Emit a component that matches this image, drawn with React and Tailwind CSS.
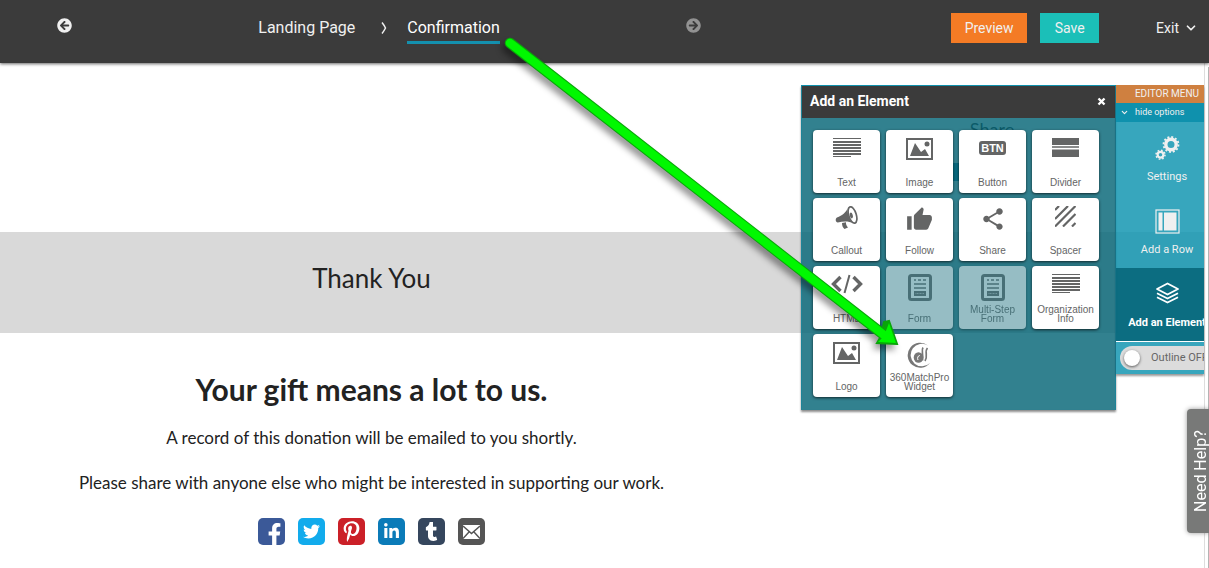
import { useState } from 'react';
import clsx from 'clsx';
import { FaArrowCircleLeft, FaArrowCircleRight, FaFacebookF, FaTwitter, FaPinterestP, FaLinkedinIn, FaTumblr } from 'react-icons/fa';
import { MdThumbUp, MdShare } from 'react-icons/md';
import { ChevronDown } from 'lucide-react';

const LinesIcon = () => (
  <svg width="28" height="20" viewBox="0 0 28 20" fill="currentColor">
    <path d="M0 0h28v1H0zM0 3h28v2H0zM0 6h28v2H0zM0 9h28v2H0zM0 12h28v2H0zM0 15h28v2H0zM0 18h18v1H0z" />
  </svg>
);

const ImageIcon = () => (
  <svg width="27" height="22" viewBox="0 0 27 22" fill="currentColor">
    <path fillRule="evenodd" d="M0 0h27v22H0zM2 2v18h23V2z" />
    <path d="M4 18 9 5l6 9 4-3 4 7z" />
    <circle cx="21" cy="6" r="2.5" />
  </svg>
);

const ButtonIcon = () => (
  <span className="mt-[3px] rounded-[3px] bg-[#646565] px-[2px] text-[11px] leading-[14px] font-bold text-white">BTN</span>
);

const DividerIcon = () => (
  <svg width="27" height="19" viewBox="0 0 27 19" fill="currentColor">
    <path d="M0 0h27v7H0zM0 8.3h27v1.4H0zM0 11.5h27V19H0z" />
  </svg>
);

const CalloutIcon = () => (
  <svg width="24" height="24" viewBox="0 0 24 24" fill="currentColor">
    <ellipse cx="17.500" cy="9" rx="3.800" ry="8.500" transform="rotate(-17 17.500 9)" fill="none" stroke="currentColor" strokeWidth="1.700" />
    <path d="M12.500 1.500C12 6 7 9.500 2 11.500c-2 1-1.500 5 .8 5 5.500-1.500 11.500-1.500 15.200.8-3.500-3.300-6-10-5.500-15.800z" />
    <path d="m7 17 4-.8c-.2 2 .5 3.600 2 5.300l-3.500 1.500C7.800 21.500 7 19.500 7 17z" />
    <ellipse cx="16.300" cy="9.500" rx="1.500" ry="3" transform="rotate(-17 16.300 9.500)" />
  </svg>
);

const CodeIcon = () => (
  <svg width="32" height="20" viewBox="0 0 32 20" fill="none" stroke="currentColor">
    <path d="M9.500 3 2.500 10l7 7M22.500 3l7 7-7 7" strokeWidth="3.400" />
    <path d="M18.500 1 13.500 19" strokeWidth="2" />
  </svg>
);

const SpacerIcon = () => (
  <svg width="21" height="21" viewBox="0 0 21 21" fill="none" stroke="currentColor" strokeWidth="2.200">
    <path d="M0 4 4 0M0 13 13 0M0 20.500 20.500 0M8 20.500 20.500 8M17 20.500 20.500 17" />
  </svg>
);

const FormIcon = () => (
  <svg width="24" height="27" viewBox="0 0 24 27" fill="none" stroke="currentColor">
    <rect x="1.500" y="1.500" width="21" height="24" rx="2" strokeWidth="3" />
    <path d="M6 6h2M10 6h3M15 6h3M6 10h12M6 14h12" strokeWidth="1.600" />
    <path d="M6 17h12v5H6z" fill="currentColor" stroke="none" />
    <path d="M7.500 19.500h9" stroke="#fff" strokeOpacity=".5" strokeDasharray="1 .5" />
  </svg>
);

const MatchIcon = () => (
  <svg width="27" height="27" viewBox="0 0 27 27" fill="none">
    <path d="M22 3.500A12.500 12.500 0 1 0 24 21 11.300 11.300 0 1 1 22 3.500z" fill="#777" />
    <ellipse cx="12.500" cy="15.500" rx="4.800" ry="5.200" fill="#777" />
    <path d="M17 5.500c-2 3 .5 6-.5 13M21.500 6c-3.500 3.500 1 8-2.500 13" stroke="#777" strokeWidth="1.700" />
    <path d="M12 18c-1-2 0-4.500 1.800-4.500" stroke="#fff" strokeWidth="1" />
  </svg>
);

const SettingsIcon = () => (
  <svg width="25" height="25" viewBox="0 0 25 25" fill="none" stroke="currentColor">
    <circle cx="16" cy="8.500" r="5.200" strokeWidth="3.400" />
    <circle cx="16" cy="8.500" r="7.500" strokeWidth="1.800" strokeDasharray="2 1.930" />
    <circle cx="5.500" cy="18.700" r="2.900" strokeWidth="2.200" />
    <circle cx="5.500" cy="18.700" r="4.500" strokeWidth="1.500" strokeDasharray="1.700 1.830" />
  </svg>
);

const RowIcon = () => (
  <svg width="25" height="25" viewBox="0 0 25 25">
    <rect x="1" y="1" width="23" height="23" fill="none" stroke="currentColor" strokeWidth="1.200" />
    <path d="M3.500 3.500h4v18h-4zM9 3.500h12.500v18H9z" fill="currentColor" />
  </svg>
);

const LayersIcon = () => (
  <svg width="25" height="22" viewBox="0 0 25 22" fill="none" stroke="currentColor" strokeWidth="1.800" strokeLinejoin="round">
    <path d="m12.500 1.500 10.500 5.500-10.500 5.500L2 7zM2 11.200l10.500 5.300L23 11.200M2 15.200l10.500 5.300L23 15.200" />
  </svg>
);

const MailIcon = () => (
  <svg width="17" height="14" viewBox="0 0 17 14">
    <path d="M0 0h17v14H0z" fill="#fff" />
    <path d="m0 1 8.500 7.500L17 1M0 13.500 6 7M17 13.500 11 7" fill="none" stroke="#555" strokeWidth="1.500" />
  </svg>
);

const elements = [
  { name: 'Text', icon: <LinesIcon /> },
  { name: 'Image', icon: <ImageIcon /> },
  { name: 'Button', icon: <ButtonIcon /> },
  { name: 'Divider', icon: <DividerIcon /> },
  { name: 'Callout', icon: <CalloutIcon /> },
  { name: 'Follow', icon: <MdThumbUp size={27} /> },
  { name: 'Share', icon: <MdShare size={26} /> },
  { name: 'Spacer', icon: <SpacerIcon /> },
  { name: 'HTML', icon: <CodeIcon /> },
  { name: 'Form', icon: <FormIcon />, disabled: true },
  { name: 'Multi-Step Form', icon: <FormIcon />, disabled: true },
  { name: 'Organization Info', icon: <LinesIcon /> },
  { name: 'Logo', icon: <ImageIcon /> },
  { name: '360MatchPro Widget', icon: <MatchIcon /> },
];

const menuItems = [
  { name: 'Settings', icon: <SettingsIcon /> },
  { name: 'Add a Row', icon: <RowIcon /> },
  { name: 'Add an Element', icon: <LayersIcon />, active: true },
];

const socials = [
  { name: 'Facebook', color: 'bg-[#3b5998]', icon: <FaFacebookF size={22} className="mt-[5px] ml-[6px]" /> },
  { name: 'Twitter', color: 'bg-[#12abec]', icon: <FaTwitter size={17} /> },
  { name: 'Pinterest', color: 'bg-[#cb2028]', icon: <FaPinterestP size={21} /> },
  { name: 'LinkedIn', color: 'bg-[#0b7bb8]', icon: <FaLinkedinIn size={17} /> },
  { name: 'Tumblr', color: 'bg-[#35465d]', icon: <FaTumblr size={19} /> },
  { name: 'Email', color: 'bg-[#555555]', icon: <MailIcon /> },
];

const Header = () => (
  <header className="relative flex h-[63px] items-start bg-[#3b3b3b] font-[Roboto,sans-serif] text-[#f0f0f0] shadow-[0_1px_3px_rgba(0,0,0,0.6)]">
    <nav className="mr-[250px] ml-[57px] flex flex-1 items-start justify-between pt-[18px]">
      <button type="button" aria-label="Previous step"><FaArrowCircleLeft size={15} /></button>
      <div className="flex items-start text-base leading-5">
        <a href="#landing">Landing Page</a>
        <svg className="mr-5 ml-[26px] mt-1" width="6" height="12" viewBox="0 0 6 12" fill="none" stroke="currentColor" strokeWidth="1.500">
          <path d="M1 .5Q3 3 4.500 6 3 9 1 11.500" />
        </svg>
        <a href="#confirmation" className="border-b-3 border-[#1490ae] pb-[3px] text-white">Confirmation</a>
      </div>
      <button type="button" aria-label="Next step" className="text-[#929292]"><FaArrowCircleRight size={15} /></button>
    </nav>
    <div className="flex items-center pt-[13px] pr-[11px] text-sm leading-[30px]">
      <button type="button" className="w-[76px] bg-[#f47b25]">Preview</button>
      <button type="button" className="ml-[13px] w-[59px] bg-[#1bbfb8]">Save</button>
      <button type="button" className="ml-[57px] flex items-center gap-[5px]">Exit <ChevronDown size={14} strokeWidth={3} /></button>
    </div>
  </header>
);

const ElementPanel = () => (
  <section className="w-[315px] self-start border border-t-[#0f91ad] border-x-[#1d8499] border-b-[#31808f] bg-[#086778]/83 shadow-[0_2px_2px_rgba(0,0,0,0.45)]">
    <div className="flex h-8 items-center justify-between bg-[#3b3b3b] pr-[9px] pl-2 font-[Roboto,sans-serif] text-white">
      <h2 className="pb-[2px] text-sm font-bold">Add an Element</h2>
      <button type="button" aria-label="Close" className="pb-[2px]">
        <svg width="9" height="9" viewBox="0 0 9 9" stroke="currentColor" strokeWidth="2.400"><path d="m1.500 1.500 6 6M7.500 1.500l-6 6" /></svg>
      </button>
    </div>
    <div className="grid grid-cols-[repeat(4,67px)] gap-x-[6px] gap-y-[5px] px-[11px] pt-3 pb-3">
      {elements.map((item) => (
        <button
          key={item.name}
          type="button"
          disabled={item.disabled}
          className={clsx(
            'flex h-[63px] flex-col items-center justify-between rounded-[4px] bg-white pt-2 pb-[6px] text-[#646565] shadow-[0_1px_3px_rgba(0,0,0,0.7)]',
            item.disabled && 'opacity-50',
          )}
        >
          {item.icon}
          <span className="-mt-2 text-[10px] leading-[9px]">{item.name}</span>
        </button>
      ))}
    </div>
  </section>
);

const EditorMenu = ({ outline, onToggle }) => (
  <aside className="w-[88px] self-start overflow-hidden font-[Roboto,sans-serif] text-[#f0f0f0] shadow-[0_2px_2px_rgba(0,0,0,0.4)]">
    <div className="w-[102px]">
      <div className="h-[18px] bg-[#cf8040] text-center text-[10px] leading-[18px]">EDITOR MENU</div>
      <button type="button" className="flex h-[19px] w-full items-center gap-[6px] bg-[#0f91ad] pl-1 text-[9px]">
        <ChevronDown size={9} strokeWidth={3} />
        hide options
      </button>
      {menuItems.map((item) => (
        <button
          key={item.name}
          type="button"
          className={clsx(
            'flex h-[73px] w-full flex-col items-center justify-between pt-[14px] pb-[11px] text-[11px]',
            item.active ? 'bg-[#076a7e]/98 font-bold text-white' : 'bg-[#0f94b0]/83',
          )}
        >
          {item.icon}
          <span className="leading-[14px] whitespace-nowrap">{item.name}</span>
        </button>
      ))}
      <div className="border-t border-white bg-[#38a6bd] py-1 pl-1">
        <label className="flex h-6 items-center gap-[11px] rounded-l-full bg-[#dcdcdc] pl-1 text-[11px] whitespace-nowrap text-[#666]">
          <input
            type="checkbox"
            checked={outline}
            onChange={onToggle}
            className="size-4 shrink-0 appearance-none rounded-full bg-white shadow-[0_1px_3px_rgba(0,0,0,0.6)]"
          />
          Outline {outline ? 'ON' : 'OFF'}
        </label>
      </div>
    </div>
  </aside>
);

const App = () => {
  const [outline, setOutline] = useState(false);

  return (
    <div className="relative flex min-h-screen flex-col overflow-hidden bg-white font-['Liberation_Sans',sans-serif]">
      <Header />

      <main className="mr-1 flex-1 border-r border-[#ddd] font-[Lato,sans-serif] text-[#222]">
        <div className="flex h-[169px] justify-end">
          <div className="mt-[54px] mr-[170px] flex w-[84px] flex-col gap-[22px]">
            <h2 className="text-center text-lg leading-6">Share</h2>
            <a href="#share" className="h-[18px] w-[74px] rounded bg-[#006f9c]" aria-label="Share" />
          </div>
        </div>
        <div className="h-[101px] bg-[#d9d9d9] pt-[28px]">
          <h1 className="w-[743px] text-center text-[26px] leading-9">Thank You</h1>
        </div>
        <div className="flex w-[743px] flex-col items-center pt-[38px]">
          <h2 className="text-3xl leading-9 font-bold">Your gift means a lot to us.</h2>
          <p className="mt-[19px] text-[17px] leading-6">A record of this donation will be emailed to you shortly.</p>
          <p className="mt-[21px] text-[17px] leading-6">Please share with anyone else who might be interested in supporting our work.</p>
          <div className="mt-[23px] flex gap-[13px]">
            {socials.map((item) => (
              <a
                key={item.name}
                href="#share"
                aria-label={item.name}
                className={clsx('flex size-[27px] items-center justify-center overflow-hidden rounded-[5px] text-white', item.color)}
              >
                {item.icon}
              </a>
            ))}
          </div>
        </div>
      </main>

      {/* floating editor tools */}
      <div className="absolute top-[85px] right-[5px] flex">
        <ElementPanel />
        <EditorMenu outline={outline} onToggle={() => setOutline(!outline)} />
      </div>

      <div className="absolute top-[67px] right-0 bottom-0 w-px bg-[#b4b4b4]" />
      <button
        type="button"
        className="absolute top-[409px] right-0 flex h-[124px] w-[22px] rotate-180 items-center justify-center rounded-r-[4px] bg-[#787978] pr-[5px] font-[Roboto,sans-serif] text-base leading-none text-white shadow-[0_0_5px_rgba(0,0,0,0.4)] [writing-mode:vertical-rl]"
      >
        Need Help?
      </button>

      <svg className="pointer-events-none absolute top-0 left-0 drop-shadow-[-3px_5px_3px_rgba(0,0,0,0.4)]" width="920" height="370" viewBox="0 0 920 370">
        <path d="M510 43 884 335" stroke="#0aa50a" strokeWidth="10.500" strokeLinecap="round" />
        <path d="m897 344-20-1 4-7 3-14 5-1z" fill="#0aa50a" stroke="#0aa50a" strokeWidth="2" />
        <path d="M510 43 884 335" stroke="#00f800" strokeWidth="8.500" strokeLinecap="round" />
        <path d="m896 343-18-1 6-6 5-13z" fill="#00f800" />
      </svg>
    </div>
  );
};

export default App;
